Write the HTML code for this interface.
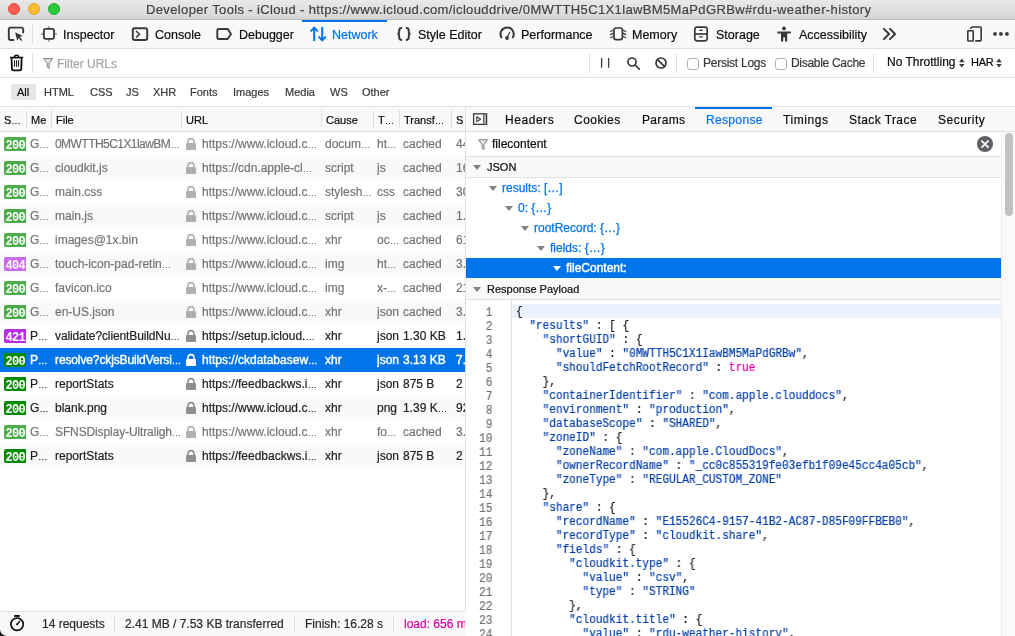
<!DOCTYPE html>
<html><head><meta charset="utf-8">
<style>
*{box-sizing:border-box;margin:0;padding:0}
html,body{width:1015px;height:636px;overflow:hidden;background:#fff}
.a,.row,.tl,.sep,.sech,.tri{will-change:transform}
body{position:relative;font-family:"Liberation Sans",sans-serif;color:#0c0c0d;font-size:12px;-webkit-text-stroke-width:0.2px}
.a{position:absolute;white-space:pre}
svg{position:absolute;overflow:visible}
#title{left:0;top:0;width:1015px;height:20px;background:linear-gradient(#e9e9e9,#d6d6d6);border-bottom:1px solid #b9b9b9}
.tl{position:absolute;top:3px;width:12px;height:12px;border-radius:50%}
#tb{left:0;top:20px;width:1015px;height:29px;background:#f9f9fa;border-bottom:1px solid #e0e0e2}
#fb{left:0;top:49px;width:1015px;height:29px;background:#fff;border-bottom:1px solid #e0e0e2}
#ty{left:0;top:78px;width:1015px;height:29px;background:#fff;border-bottom:1px solid #e0e0e2}
.tab{font-size:12.5px;top:28px;color:#0c0c0d}
.sep{position:absolute;width:1px;background:#e0e0e2}

#hdr{left:0;top:107px;width:466px;height:25px;background:#f9f9fa;border-bottom:1px solid #e0e0e2}
.h{font-size:11px;top:114px;color:#0c0c0d}
.row{position:absolute;left:0;width:465px;height:24px;background:#fff;color:#222226}
.row.alt{background:#f9f9fa}
.row.sel{background:#0074e8;color:#fff;-webkit-text-stroke-width:0.4px}
.row .c{position:absolute;top:0;height:24px;overflow:hidden;white-space:pre;line-height:24px;font-size:12px}
.row.cached .c{opacity:.7}
.row.cached{color:#38383d}
.el{font-size:9.5px}
.t{padding-top:0}
.badge{position:absolute;left:4px;top:5px;width:26px;height:14px;border-radius:2px;color:#fff;font-family:"Liberation Mono",monospace;font-size:12px;letter-spacing:-0.7px;line-height:18.5px;padding-left:1.5px;overflow:hidden;font-weight:bold;-webkit-text-stroke-width:0}
.b2{background:#058b00}.b4{background:#b82ee5}
.lock{color:#8f8f92}
.row.sel .lock{color:#fff}
#split{left:465px;top:107px;width:1px;height:529px;background:#e0e0e2}
#foot{left:0;top:611px;width:466px;height:25px;background:#f9f9fa;border-top:1px solid #e0e0e2}
.f{font-size:12px;top:617px;color:#2a2a2e}
#rtabs{left:466px;top:107px;width:549px;height:25px;background:#f9f9fa;border-bottom:1px solid #e0e0e2}
.rt{font-size:12px;top:113px;color:#0c0c0d}
#rfilter{left:466px;top:132px;width:535px;height:25px;background:#fff;border-bottom:1px solid #e0e0e2}
.sech{position:absolute;left:466px;width:535px;height:21px;background:#f9f9fa;border-bottom:1px solid #e0e0e2}
.sect{font-size:11px;color:#0c0c0d}
.tri{position:absolute;width:0;height:0;border-left:4px solid transparent;border-right:4px solid transparent;border-top:5px solid #808085}
.tree{font-size:12px;color:#0074e8;-webkit-text-stroke:0.25px #0074e8}
#strack{left:1001px;top:132px;width:14px;height:504px;background:#fafafa;border-left:1px solid #ededf0}
#sthumb{left:1005px;top:133px;width:8px;height:83px;background:#c1c1c1;border-radius:4px}
#editor{left:466px;top:300px;width:536px;height:336px;background:#fff}
#gutb{left:511px;top:300px;width:1px;height:336px;background:#e0e0e2}
#hl{left:512px;top:304px;width:489px;height:14px;background:#e9f2fd}
.gut{left:466px;top:304px;width:26.5px;text-align:right;font-family:"Liberation Mono",monospace;font-size:12px;line-height:14px;color:#737373;transform:scaleX(0.9236);transform-origin:100% 0;padding-top:2px}
.code{left:516px;top:304px;font-family:"Liberation Mono",monospace;font-size:12px;line-height:14px;color:#18191a;transform:scaleX(0.9236);transform-origin:0 0;padding-top:1px}
.code i{font-style:normal;color:#003eaa}
.code b{font-weight:normal;color:#dd00a9}
</style></head><body>
<!-- title bar -->
<div class="a" id="title"></div>
<div class="tl" style="left:8px;background:#fe5f57;border:0.5px solid #e14640"></div>
<div class="tl" style="left:28px;background:#febc2e;border:0.5px solid #dfa123"></div>
<div class="tl" style="left:48px;background:#28c840;border:0.5px solid #1aab29"></div>
<div class="a" style="left:146px;top:2px;font-size:13px;letter-spacing:0.36px;color:#424242">Developer Tools - iCloud - https://www.icloud.com/iclouddrive/0MWTTH5C1X1lawBM5MaPdGRBw#rdu-weather-history</div>

<!-- toolbox -->
<div class="a" id="tb"></div>
<div class="sep" style="left:32px;top:24px;height:20px"></div>
<div class="a tab" style="left:63px">Inspector</div>
<div class="a tab" style="left:155px">Console</div>
<div class="a tab" style="left:239px">Debugger</div>
<div class="a" style="left:302px;top:20px;width:85px;height:2px;background:#0074e8"></div>
<div class="a tab" style="left:332px;color:#0074e8">Network</div>
<div class="a tab" style="left:418px">Style Editor</div>
<div class="a tab" style="left:521px">Performance</div>
<div class="a tab" style="left:632px">Memory</div>
<div class="a tab" style="left:716px">Storage</div>
<div class="a tab" style="left:799px">Accessibility</div>

<!-- filter bar -->
<div class="a" id="fb"></div>
<div class="sep" style="left:32px;top:53px;height:20px"></div>
<div class="a" style="left:57px;top:56.5px;font-size:12px;color:#a4a4a6">Filter URLs</div>
<div class="sep" style="left:589px;top:53px;height:20px"></div>
<div class="sep" style="left:676px;top:53px;height:20px"></div>
<div class="a" style="left:687px;top:58px;width:12px;height:12px;border:1px solid #b1b1b3;border-radius:3px;background:#fff"></div>
<div class="a" style="left:703px;top:56px;font-size:12px;letter-spacing:-0.25px;color:#38383d">Persist Logs</div>
<div class="a" style="left:775px;top:58px;width:12px;height:12px;border:1px solid #b1b1b3;border-radius:3px;background:#fff"></div>
<div class="a" style="left:791px;top:56px;font-size:12px;letter-spacing:-0.3px;color:#38383d">Disable Cache</div>
<div class="sep" style="left:873px;top:53px;height:20px"></div>
<div class="a" style="left:887px;top:55px;font-size:12px;color:#0c0c0d">No Throttling</div>
<div class="a" style="left:970.5px;top:56px;font-size:11px;letter-spacing:-0.3px;color:#0c0c0d">HAR</div>

<!-- type bar -->
<div class="a" id="ty"></div>
<div class="a" style="left:11px;top:84px;width:25px;height:16px;background:#e6e6e7;border-radius:2px"></div>
<div class="a" style="left:17px;top:86px;font-size:11px;color:#0c0c0d">All</div>
<div class="a" style="left:44px;top:86px;font-size:11px;color:#38383d">HTML</div>
<div class="a" style="left:90px;top:86px;font-size:11px;color:#38383d">CSS</div>
<div class="a" style="left:126px;top:86px;font-size:11px;color:#38383d">JS</div>
<div class="a" style="left:153px;top:86px;font-size:11px;color:#38383d">XHR</div>
<div class="a" style="left:190px;top:86px;font-size:11px;color:#38383d">Fonts</div>
<div class="a" style="left:233px;top:86px;font-size:11px;color:#38383d">Images</div>
<div class="a" style="left:285px;top:86px;font-size:11px;color:#38383d">Media</div>
<div class="a" style="left:330px;top:86px;font-size:11px;color:#38383d">WS</div>
<div class="a" style="left:362px;top:86px;font-size:11px;color:#38383d">Other</div>


<!-- request table header -->
<div class="a" id="hdr"></div>
<div class="sep" style="left:26px;top:110px;height:18px"></div>
<div class="sep" style="left:51px;top:110px;height:18px"></div>
<div class="sep" style="left:181px;top:110px;height:18px"></div>
<div class="sep" style="left:321px;top:110px;height:18px"></div>
<div class="sep" style="left:373px;top:110px;height:18px"></div>
<div class="sep" style="left:399px;top:110px;height:18px"></div>
<div class="sep" style="left:451px;top:110px;height:18px"></div>
<div class="a h" style="left:4px">S<span class="el">…</span></div>
<div class="a h" style="left:31px">Me</div>
<div class="a h" style="left:56px">File</div>
<div class="a h" style="left:186px">URL</div>
<div class="a h" style="left:326px">Cause</div>
<div class="a h" style="left:378px">T<span class="el">…</span></div>
<div class="a h" style="left:404px">Transf<span class="el">…</span></div>
<div class="a h" style="left:456px">S</div>
<div class="row cached" style="top:132px"><div class="c" style="left:0;width:26px"><span class="badge b2">200</span></div><div class="c t" style="left:30px;width:21px">G<span class="el">…</span></div><div class="c t" style="left:55px;width:126px;letter-spacing:-0.55px">0MWTTH5C1X1lawBM<span class="el">…</span></div><div class="c" style="left:182px;width:139px"><svg class="lock" width="10" height="12" viewBox="0 0 10 12" style="left:4px;top:6px"><path d="M2 5V3.6a3 3 0 0 1 6 0V5" fill="none" stroke="currentColor" stroke-width="1.6"/><rect x="0" y="5" width="10" height="7" rx="1" fill="currentColor"/></svg><span class="t" style="position:absolute;left:20px">https://www.icloud.c<span class="el">…</span></span></div><div class="c t" style="left:325px;width:48px">docum<span class="el">…</span></div><div class="c t" style="left:377px;width:22px">ht<span class="el">…</span></div><div class="c t" style="left:403px;width:48px">cached</div><div class="c t" style="left:456px;width:9px">44</div></div>
<div class="row alt cached" style="top:156px"><div class="c" style="left:0;width:26px"><span class="badge b2">200</span></div><div class="c t" style="left:30px;width:21px">G<span class="el">…</span></div><div class="c t" style="left:55px;width:126px">cloudkit.js</div><div class="c" style="left:182px;width:139px"><svg class="lock" width="10" height="12" viewBox="0 0 10 12" style="left:4px;top:6px"><path d="M2 5V3.6a3 3 0 0 1 6 0V5" fill="none" stroke="currentColor" stroke-width="1.6"/><rect x="0" y="5" width="10" height="7" rx="1" fill="currentColor"/></svg><span class="t" style="position:absolute;left:20px">https://cdn.apple-cl<span class="el">…</span></span></div><div class="c t" style="left:325px;width:48px">script</div><div class="c t" style="left:377px;width:22px">js</div><div class="c t" style="left:403px;width:48px">cached</div><div class="c t" style="left:456px;width:9px">16</div></div>
<div class="row cached" style="top:180px"><div class="c" style="left:0;width:26px"><span class="badge b2">200</span></div><div class="c t" style="left:30px;width:21px">G<span class="el">…</span></div><div class="c t" style="left:55px;width:126px">main.css</div><div class="c" style="left:182px;width:139px"><svg class="lock" width="10" height="12" viewBox="0 0 10 12" style="left:4px;top:6px"><path d="M2 5V3.6a3 3 0 0 1 6 0V5" fill="none" stroke="currentColor" stroke-width="1.6"/><rect x="0" y="5" width="10" height="7" rx="1" fill="currentColor"/></svg><span class="t" style="position:absolute;left:20px">https://www.icloud.c<span class="el">…</span></span></div><div class="c t" style="left:325px;width:48px">stylesh<span class="el">…</span></div><div class="c t" style="left:377px;width:22px">css</div><div class="c t" style="left:403px;width:48px">cached</div><div class="c t" style="left:456px;width:9px">30</div></div>
<div class="row alt cached" style="top:204px"><div class="c" style="left:0;width:26px"><span class="badge b2">200</span></div><div class="c t" style="left:30px;width:21px">G<span class="el">…</span></div><div class="c t" style="left:55px;width:126px">main.js</div><div class="c" style="left:182px;width:139px"><svg class="lock" width="10" height="12" viewBox="0 0 10 12" style="left:4px;top:6px"><path d="M2 5V3.6a3 3 0 0 1 6 0V5" fill="none" stroke="currentColor" stroke-width="1.6"/><rect x="0" y="5" width="10" height="7" rx="1" fill="currentColor"/></svg><span class="t" style="position:absolute;left:20px">https://www.icloud.c<span class="el">…</span></span></div><div class="c t" style="left:325px;width:48px">script</div><div class="c t" style="left:377px;width:22px">js</div><div class="c t" style="left:403px;width:48px">cached</div><div class="c t" style="left:456px;width:9px">1.8</div></div>
<div class="row cached" style="top:228px"><div class="c" style="left:0;width:26px"><span class="badge b2">200</span></div><div class="c t" style="left:30px;width:21px">G<span class="el">…</span></div><div class="c t" style="left:55px;width:126px">images@1x.bin</div><div class="c" style="left:182px;width:139px"><svg class="lock" width="10" height="12" viewBox="0 0 10 12" style="left:4px;top:6px"><path d="M2 5V3.6a3 3 0 0 1 6 0V5" fill="none" stroke="currentColor" stroke-width="1.6"/><rect x="0" y="5" width="10" height="7" rx="1" fill="currentColor"/></svg><span class="t" style="position:absolute;left:20px">https://www.icloud.c<span class="el">…</span></span></div><div class="c t" style="left:325px;width:48px">xhr</div><div class="c t" style="left:377px;width:22px">oc<span class="el">…</span></div><div class="c t" style="left:403px;width:48px">cached</div><div class="c t" style="left:456px;width:9px">61</div></div>
<div class="row alt cached" style="top:252px"><div class="c" style="left:0;width:26px"><span class="badge b4">404</span></div><div class="c t" style="left:30px;width:21px">G<span class="el">…</span></div><div class="c t" style="left:55px;width:126px">touch-icon-pad-retin<span class="el">…</span></div><div class="c" style="left:182px;width:139px"><svg class="lock" width="10" height="12" viewBox="0 0 10 12" style="left:4px;top:6px"><path d="M2 5V3.6a3 3 0 0 1 6 0V5" fill="none" stroke="currentColor" stroke-width="1.6"/><rect x="0" y="5" width="10" height="7" rx="1" fill="currentColor"/></svg><span class="t" style="position:absolute;left:20px">https://www.icloud.c<span class="el">…</span></span></div><div class="c t" style="left:325px;width:48px">img</div><div class="c t" style="left:377px;width:22px">ht<span class="el">…</span></div><div class="c t" style="left:403px;width:48px">cached</div><div class="c t" style="left:456px;width:9px">3.</div></div>
<div class="row cached" style="top:276px"><div class="c" style="left:0;width:26px"><span class="badge b2">200</span></div><div class="c t" style="left:30px;width:21px">G<span class="el">…</span></div><div class="c t" style="left:55px;width:126px">favicon.ico</div><div class="c" style="left:182px;width:139px"><svg class="lock" width="10" height="12" viewBox="0 0 10 12" style="left:4px;top:6px"><path d="M2 5V3.6a3 3 0 0 1 6 0V5" fill="none" stroke="currentColor" stroke-width="1.6"/><rect x="0" y="5" width="10" height="7" rx="1" fill="currentColor"/></svg><span class="t" style="position:absolute;left:20px">https://www.icloud.c<span class="el">…</span></span></div><div class="c t" style="left:325px;width:48px">img</div><div class="c t" style="left:377px;width:22px">x-<span class="el">…</span></div><div class="c t" style="left:403px;width:48px">cached</div><div class="c t" style="left:456px;width:9px">21</div></div>
<div class="row alt cached" style="top:300px"><div class="c" style="left:0;width:26px"><span class="badge b2">200</span></div><div class="c t" style="left:30px;width:21px">G<span class="el">…</span></div><div class="c t" style="left:55px;width:126px">en-US.json</div><div class="c" style="left:182px;width:139px"><svg class="lock" width="10" height="12" viewBox="0 0 10 12" style="left:4px;top:6px"><path d="M2 5V3.6a3 3 0 0 1 6 0V5" fill="none" stroke="currentColor" stroke-width="1.6"/><rect x="0" y="5" width="10" height="7" rx="1" fill="currentColor"/></svg><span class="t" style="position:absolute;left:20px">https://www.icloud.c<span class="el">…</span></span></div><div class="c t" style="left:325px;width:48px">xhr</div><div class="c t" style="left:377px;width:22px">json</div><div class="c t" style="left:403px;width:48px">cached</div><div class="c t" style="left:456px;width:9px">3.</div></div>
<div class="row" style="top:324px"><div class="c" style="left:0;width:26px"><span class="badge b4">421</span></div><div class="c t" style="left:30px;width:21px">P<span class="el">…</span></div><div class="c t" style="left:55px;width:126px;letter-spacing:-0.12px">validate?clientBuildNu<span class="el">…</span></div><div class="c" style="left:182px;width:139px"><svg class="lock" width="10" height="12" viewBox="0 0 10 12" style="left:4px;top:6px"><path d="M2 5V3.6a3 3 0 0 1 6 0V5" fill="none" stroke="currentColor" stroke-width="1.6"/><rect x="0" y="5" width="10" height="7" rx="1" fill="currentColor"/></svg><span class="t" style="position:absolute;left:20px">https://setup.icloud.<span class="el">…</span></span></div><div class="c t" style="left:325px;width:48px">xhr</div><div class="c t" style="left:377px;width:22px">json</div><div class="c t" style="left:403px;width:48px">1.30 KB</div><div class="c t" style="left:456px;width:9px">1.</div></div>
<div class="row sel" style="top:348px"><div class="c" style="left:0;width:26px"><span class="badge b2">200</span></div><div class="c t" style="left:30px;width:21px">P<span class="el">…</span></div><div class="c t" style="left:55px;width:126px;letter-spacing:-0.12px">resolve?ckjsBuildVersi<span class="el">…</span></div><div class="c" style="left:182px;width:139px"><svg class="lock" width="10" height="12" viewBox="0 0 10 12" style="left:4px;top:6px"><path d="M2 5V3.6a3 3 0 0 1 6 0V5" fill="none" stroke="currentColor" stroke-width="1.6"/><rect x="0" y="5" width="10" height="7" rx="1" fill="currentColor"/></svg><span class="t" style="position:absolute;left:20px">https://ckdatabasew<span class="el">…</span></span></div><div class="c t" style="left:325px;width:48px">xhr</div><div class="c t" style="left:377px;width:22px">json</div><div class="c t" style="left:403px;width:48px">3.13 KB</div><div class="c t" style="left:456px;width:9px">7.</div></div>
<div class="row" style="top:372px"><div class="c" style="left:0;width:26px"><span class="badge b2">200</span></div><div class="c t" style="left:30px;width:21px">P<span class="el">…</span></div><div class="c t" style="left:55px;width:126px">reportStats</div><div class="c" style="left:182px;width:139px"><svg class="lock" width="10" height="12" viewBox="0 0 10 12" style="left:4px;top:6px"><path d="M2 5V3.6a3 3 0 0 1 6 0V5" fill="none" stroke="currentColor" stroke-width="1.6"/><rect x="0" y="5" width="10" height="7" rx="1" fill="currentColor"/></svg><span class="t" style="position:absolute;left:20px">https://feedbackws.i<span class="el">…</span></span></div><div class="c t" style="left:325px;width:48px">xhr</div><div class="c t" style="left:377px;width:22px">json</div><div class="c t" style="left:403px;width:48px">875 B</div><div class="c t" style="left:456px;width:9px">2</div></div>
<div class="row alt" style="top:396px"><div class="c" style="left:0;width:26px"><span class="badge b2">200</span></div><div class="c t" style="left:30px;width:21px">G<span class="el">…</span></div><div class="c t" style="left:55px;width:126px">blank.png</div><div class="c" style="left:182px;width:139px"><svg class="lock" width="10" height="12" viewBox="0 0 10 12" style="left:4px;top:6px"><path d="M2 5V3.6a3 3 0 0 1 6 0V5" fill="none" stroke="currentColor" stroke-width="1.6"/><rect x="0" y="5" width="10" height="7" rx="1" fill="currentColor"/></svg><span class="t" style="position:absolute;left:20px">https://www.icloud.c<span class="el">…</span></span></div><div class="c t" style="left:325px;width:48px">xhr</div><div class="c t" style="left:377px;width:22px">png</div><div class="c t" style="left:403px;width:48px">1.39 K<span class="el">…</span></div><div class="c t" style="left:456px;width:9px">92</div></div>
<div class="row cached" style="top:420px"><div class="c" style="left:0;width:26px"><span class="badge b2">200</span></div><div class="c t" style="left:30px;width:21px">G<span class="el">…</span></div><div class="c t" style="left:55px;width:126px;letter-spacing:-0.12px">SFNSDisplay-Ultraligh<span class="el">…</span></div><div class="c" style="left:182px;width:139px"><svg class="lock" width="10" height="12" viewBox="0 0 10 12" style="left:4px;top:6px"><path d="M2 5V3.6a3 3 0 0 1 6 0V5" fill="none" stroke="currentColor" stroke-width="1.6"/><rect x="0" y="5" width="10" height="7" rx="1" fill="currentColor"/></svg><span class="t" style="position:absolute;left:20px">https://www.icloud.c<span class="el">…</span></span></div><div class="c t" style="left:325px;width:48px">xhr</div><div class="c t" style="left:377px;width:22px">fo<span class="el">…</span></div><div class="c t" style="left:403px;width:48px">cached</div><div class="c t" style="left:456px;width:9px">3.</div></div>
<div class="row alt" style="top:444px"><div class="c" style="left:0;width:26px"><span class="badge b2">200</span></div><div class="c t" style="left:30px;width:21px">P<span class="el">…</span></div><div class="c t" style="left:55px;width:126px">reportStats</div><div class="c" style="left:182px;width:139px"><svg class="lock" width="10" height="12" viewBox="0 0 10 12" style="left:4px;top:6px"><path d="M2 5V3.6a3 3 0 0 1 6 0V5" fill="none" stroke="currentColor" stroke-width="1.6"/><rect x="0" y="5" width="10" height="7" rx="1" fill="currentColor"/></svg><span class="t" style="position:absolute;left:20px">https://feedbackws.i<span class="el">…</span></span></div><div class="c t" style="left:325px;width:48px">xhr</div><div class="c t" style="left:377px;width:22px">json</div><div class="c t" style="left:403px;width:48px">875 B</div><div class="c t" style="left:456px;width:9px">2</div></div>
<div class="a" id="split"></div>
<!-- footer -->
<div class="a" id="foot"></div>
<div class="sep" style="left:114px;top:615px;height:18px"></div>
<div class="sep" style="left:294px;top:615px;height:18px"></div>
<div class="sep" style="left:393px;top:615px;height:18px"></div>
<div class="a f" style="left:42px">14 requests</div>
<div class="a f" style="left:125px">2.41 MB / 7.53 KB transferred</div>
<div class="a f" style="left:305px">Finish: 16.28 s</div>
<div class="a f" style="left:404px;color:#dd00a9;width:61px;overflow:hidden">load: 656 ms</div>

<!-- right panel -->
<div class="a" id="rtabs"></div>
<div class="a" style="left:695px;top:107px;width:77px;height:2px;background:#0074e8"></div>
<div class="a rt" style="left:505px;letter-spacing:0.55px">Headers</div>
<div class="a rt" style="left:574px;letter-spacing:0.47px">Cookies</div>
<div class="a rt" style="left:642px;letter-spacing:0.34px">Params</div>
<div class="a rt" style="left:706px;color:#0074e8;letter-spacing:0.34px">Response</div>
<div class="a rt" style="left:783px;letter-spacing:0.58px">Timings</div>
<div class="a rt" style="left:849px;letter-spacing:0.42px">Stack Trace</div>
<div class="a rt" style="left:938px;letter-spacing:0.5px">Security</div>
<div class="a" id="rfilter"></div>
<div class="a" style="left:492px;top:137px;font-size:12px;color:#0c0c0d">filecontent</div>
<div class="a" style="left:977px;top:136px;width:16px;height:16px;border-radius:50%;background:#606064"></div>
<div class="sech" style="top:157px"></div>
<div class="tri" style="left:473px;top:165px"></div>
<div class="a sect" style="left:487px;top:161px">JSON</div>
<div class="tri" style="left:489px;top:186px"></div>
<div class="a tree" style="left:502px;top:181px">results: […]</div>
<div class="tri" style="left:505px;top:206px"></div>
<div class="a tree" style="left:518px;top:201px">0: {…}</div>
<div class="tri" style="left:521px;top:226px"></div>
<div class="a tree" style="left:534px;top:221px">rootRecord: {…}</div>
<div class="tri" style="left:537px;top:246px"></div>
<div class="a tree" style="left:550px;top:241px">fields: {…}</div>
<div class="a" style="left:466px;top:258px;width:535px;height:20px;background:#0074e8"></div>
<div class="tri" style="left:553px;top:266px;border-top-color:#fff"></div>
<div class="a tree" style="left:566px;top:261px;color:#fff;-webkit-text-stroke:0.45px #fff">fileContent:</div>
<div class="sech" style="top:278px;height:22px"></div>
<div class="tri" style="left:473px;top:287px"></div>
<div class="a sect" style="left:487px;top:283px">Response Payload</div>
<div class="a" id="editor"></div>
<div class="a" id="hl"></div>
<div class="a" id="gutb"></div>
<div class="a gut">1
2
3
4
5
6
7
8
9
10
11
12
13
14
15
16
17
18
19
20
21
22
23
24</div>
<div class="a code">{
  <i>"results"</i> : [ {
    <i>"shortGUID"</i> : {
      <i>"value"</i> : <i>"0MWTTH5C1X1IawBM5MaPdGRBw"</i>,
      <i>"shouldFetchRootRecord"</i> : <b>true</b>
    },
    <i>"containerIdentifier"</i> : <i>"com.apple.clouddocs"</i>,
    <i>"environment"</i> : <i>"production"</i>,
    <i>"databaseScope"</i> : <i>"SHARED"</i>,
    <i>"zoneID"</i> : {
      <i>"zoneName"</i> : <i>"com.apple.CloudDocs"</i>,
      <i>"ownerRecordName"</i> : <i>"_cc0c855319fe03efb1f09e45cc4a05cb"</i>,
      <i>"zoneType"</i> : <i>"REGULAR_CUSTOM_ZONE"</i>
    },
    <i>"share"</i> : {
      <i>"recordName"</i> : <i>"E15526C4-9157-41B2-AC87-D85F09FFBEB0"</i>,
      <i>"recordType"</i> : <i>"cloudkit.share"</i>,
      <i>"fields"</i> : {
        <i>"cloudkit.type"</i> : {
          <i>"value"</i> : <i>"csv"</i>,
          <i>"type"</i> : <i>"STRING"</i>
        },
        <i>"cloudkit.title"</i> : {
          <i>"value"</i> : <i>"rdu-weather-history"</i>,</div>
<div class="a" id="strack"></div>
<div class="a" id="sthumb"></div>

<!-- icons -->
<svg style="left:0;top:0" width="1015" height="636" viewBox="0 0 1015 636">
 <g fill="none" stroke="#38383d" stroke-width="1.9" stroke-linecap="round" stroke-linejoin="round">
  <!-- picker -->
  <path d="M13.5 40H10.8A2 2 0 0 1 8.8 38V29.6A2 2 0 0 1 10.8 27.6H21.2A2 2 0 0 1 23.2 29.6V32.5"/>
 </g>
 <path d="M15.1 32.2L22.8 36L19.8 37.1L22.3 40L21.2 41L18.7 38.1L17.2 40.8Z" fill="#38383d"/>
 <g fill="none" stroke="#38383d" stroke-width="1.7">
  <!-- inspector -->
  <rect x="43.9" y="28.9" width="10.1" height="9.9" rx="1.8" stroke-width="1.8"/>
 </g>
 <g stroke="#38383d" stroke-width="1.5" opacity=".55">
  <path d="M49 25.9V28.2M49 39.5V41.8M41.1 33.9H43.2M54.7 33.9H56.9"/>
 </g>
 <g fill="none" stroke="#38383d" stroke-width="1.95" stroke-linejoin="round">
  <!-- console -->
  <rect x="132.8" y="28.2" width="14.4" height="11.8" rx="2"/>
  <path d="M136 31L139.6 34.2L136 37.4" stroke-width="1.5"/>
  <!-- debugger -->
  <path d="M217.3 30.3A1.4 1.4 0 0 1 218.7 28.9H227.6L231 34L227.6 39H218.7A1.4 1.4 0 0 1 217.3 37.6Z"/>
 </g>
 <g fill="none" stroke="#0074e8" stroke-width="2" stroke-linecap="butt">
  <!-- network -->
  <path d="M314.2 27.6V41M310.6 31.4L314.2 27.6L317.8 31.4"/>
  <path d="M322.2 27V40.4M318.6 36.6L322.2 40.4L325.8 36.6"/>
 </g>
 <g fill="none" stroke="#38383d" stroke-width="1.8" stroke-linecap="round">
  <!-- style editor braces -->
  <path d="M401.3 28.1C399.4 28.1 399.1 29.3 399.1 31.2V32.3C399.1 33.4 398.5 34 397.4 34C398.5 34 399.1 34.6 399.1 35.7V36.8C399.1 38.7 399.4 39.9 401.3 39.9" stroke-width="2"/>
  <path d="M406.6 28.1C408.5 28.1 408.8 29.3 408.8 31.2V32.3C408.8 33.4 409.4 34 410.5 34C409.4 34 408.8 34.6 408.8 35.7V36.8C408.8 38.7 408.5 39.9 406.6 39.9" stroke-width="2"/>
  <!-- performance -->
  <path d="M501.3 37.3A6.6 6.6 0 1 1 512.9 37.3" stroke-width="2"/>
  <path d="M507 38L509.8 32.2" stroke-width="1.2"/>
 </g>
 <circle cx="507" cy="38" r="1.9" fill="#38383d"/>
 <g fill="none" stroke="#38383d" stroke-width="1.7">
  <!-- memory -->
  <rect x="614" y="28" width="8.4" height="11.6" rx="2"/>
  <path d="M613 30.3L610.6 31.5M613 33.4L610.6 34.6M613 36.5L610.6 37.7M623.4 30.3L625.8 31.5M623.4 33.4L625.8 34.6M623.4 36.5L625.8 37.7" stroke-width="1.2" stroke-linecap="round"/>
  <!-- storage -->
  <rect x="694.8" y="27.2" width="12.4" height="13.6" rx="2.2"/>
  <path d="M694.8 34H707.2"/>
  <path d="M699.2 30.4H702.8M699.2 36.8H702.8" stroke-width="1.2"/>
 </g>
 <g fill="#38383d">
  <!-- accessibility -->
  <circle cx="784" cy="28.4" r="1.9"/>
  <rect x="777.3" y="31.5" width="13.6" height="1.9" rx=".6"/>
  <path d="M781 33H787.2V41.6H785V37.4H783.2V41.6H781Z"/>
 </g>
 <g fill="none" stroke="#38383d" stroke-width="1.7" stroke-linecap="round" stroke-linejoin="round">
  <!-- chevrons -->
  <path d="M883.9 28.9L889.1 34L883.9 39.1M889.9 28.9L895.1 34L889.9 39.1" stroke-width="2"/>
 </g>
 <g fill="none" stroke="#38383d" stroke-width="1.5">
  <!-- dock -->
  <path d="M971 29V28.2A1.2 1.2 0 0 1 972.2 27H980A1.2 1.2 0 0 1 981.2 28.2V39.7A1.2 1.2 0 0 1 980 40.9H975.2" stroke-width="1.6"/>
  <rect x="967.8" y="30.8" width="5.4" height="10.2" rx=".6" stroke-width="1.6"/>
 </g>
 <g fill="#38383d">
  <circle cx="995" cy="33.9" r="1.9"/><circle cx="1000.9" cy="33.9" r="1.9"/><circle cx="1006.9" cy="33.9" r="1.9"/>
 </g>
 <!-- trash -->
 <g fill="none" stroke="#0c0c0d" stroke-width="1.6" stroke-linejoin="round">
  <path d="M11.6 58.4L11.9 68.8A1.8 1.8 0 0 0 13.7 70.4H19.5A1.8 1.8 0 0 0 21.3 68.8L21.6 58.4" stroke-width="1.8"/>
  <path d="M10 57.6H23.2" stroke-width="1.7"/>
  <path d="M14.5 57.2A2.1 1.9 0 0 1 18.7 57.2" stroke-width="1.4"/>
  <path d="M14.6 60.2V66.8M16.6 60.2V66.8M18.6 60.2V66.8" stroke-width="1"/>
 </g>
 <!-- funnel -->
 <path d="M43.6 58.6H52.6L49.2 63.2V68.4L47.2 67V63.2Z" fill="#e2e2e4" stroke="#7e7e83" stroke-width="1" stroke-linejoin="round"/>
 <g fill="none" stroke="#38383d" stroke-width="1.3">
  <path d="M601.6 58V67.8M608.6 58V67.8"/>
 </g>
 <g fill="none" stroke="#38383d" stroke-width="1.7" stroke-linecap="round">
  <circle cx="632" cy="62" r="4"/>
  <path d="M635 65L639.4 69.2"/>
  <circle cx="661" cy="63" r="5"/>
  <path d="M657.6 59.6L664.4 66.4"/>
 </g>
 <g fill="#38383d">
  <path d="M959 62.2L961.8 58.6L964.6 62.2ZM959 64L961.8 67.6L964.6 64Z"/>
  <path d="M996.2 62.2L999 58.6L1001.8 62.2ZM996.2 64L999 67.6L1001.8 64Z"/>
 </g>
 <!-- footer stopwatch -->
 <g fill="none" stroke="#0c0c0d" stroke-width="1.6" stroke-linecap="round">
  <circle cx="17.1" cy="624.2" r="6.2"/>
  <path d="M17.1 624.2L19.8 621.3" stroke-width="1.3"/>
 </g>
 <rect x="14.2" y="615" width="5.6" height="1.9" fill="#0c0c0d"/>
 <circle cx="17.1" cy="624.2" r="1" fill="#0c0c0d"/>
 <!-- right toggle -->
 <g fill="none" stroke="#38383d" stroke-width="1.3">
  <rect x="473.6" y="113.8" width="13" height="10.6"/>
  <path d="M483.9 113.8V124.4"/>
 </g>
 <rect x="484.4" y="114.4" width="1.6" height="9.4" fill="#b1b1b3"/>
 <path d="M476.8 116.8L480.6 119.2L476.8 121.6Z" fill="none" stroke="#38383d" stroke-width="1.1" stroke-linejoin="round"/>
 <path d="M478.4 139.8H487.4L484 144.4V149.6L482 148.2V144.4Z" fill="#e2e2e4" stroke="#7e7e83" stroke-width="1" stroke-linejoin="round"/>
 <g stroke="#fff" stroke-width="1.6" stroke-linecap="butt"><path d="M981.4 140.6L988.6 147.6M988.6 140.6L981.4 147.6"/></g>
 <!-- window corner -->
 <path d="M0 629A7 7 0 0 0 7 636H0Z" fill="#1a1a1a"/>
</svg>
</body></html>
